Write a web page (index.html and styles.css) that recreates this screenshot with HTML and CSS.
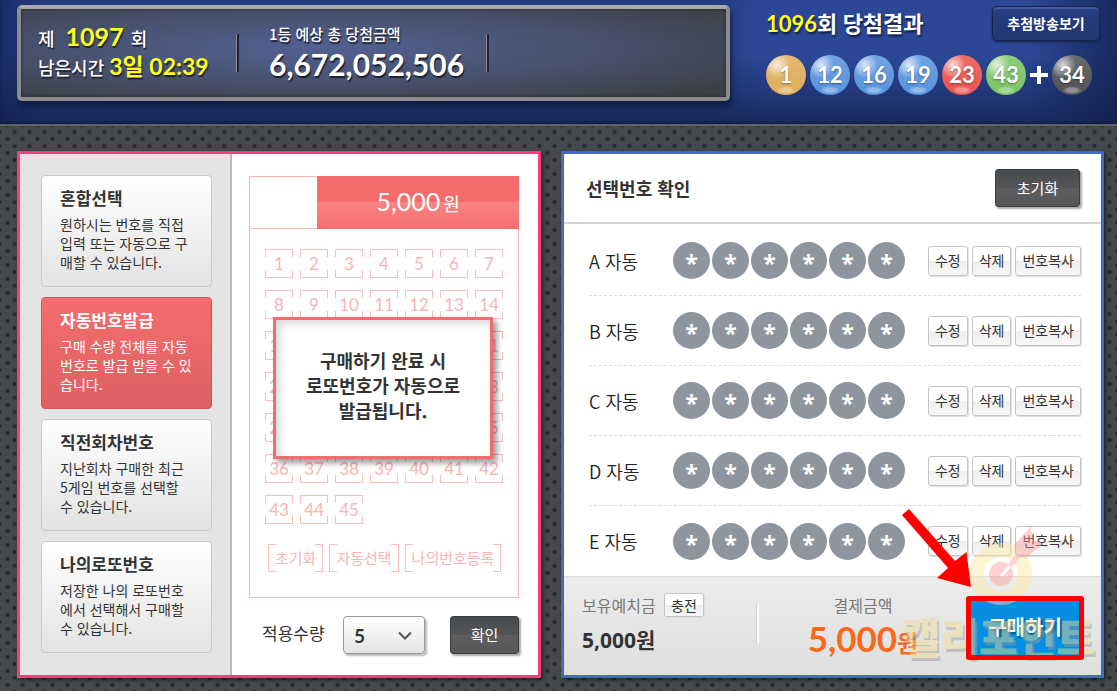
FILE: index.html
```html
<!DOCTYPE html>
<html lang="ko">
  <head>
    <meta charset="UTF-8" />
    <meta name="viewport" content="width=device-width, initial-scale=1.0" />
    <title>로또 구매</title>
    <link rel="stylesheet" href="styles.css">
  </head>
  <body>
    <header class="top">
      <div class="board">
        <div class="board-round">
          <p>제 <strong class="round-no">1097</strong> 회</p>
          <p>남은시간 <strong>3일 02:39</strong></p>
        </div>
        <div class="board-prize">
          <h2>1등 예상 총 당첨금액</h2>
          <p>6,672,052,506</p>
        </div>
      </div>
      <div class="result">
        <div class="result-head">
          <h1><em>1096</em>회 당첨결과</h1>
          <button type="button" class="btn-live">추첨방송보기</button>
        </div>
        <div class="balls">
          <span class="ball yellow">1</span>
          <span class="ball blue">12</span>
          <span class="ball blue">16</span>
          <span class="ball blue">19</span>
          <span class="ball red">23</span>
          <span class="ball green">43</span>
          <svg class="plus" viewBox="0 0 18 18"><path d="M9 0v18M0 9h18" /></svg>
          <span class="ball gray">34</span>
        </div>
      </div>
    </header>

    <main class="panels">
      <section class="panel pick">
        <nav class="ways">
          <button type="button" class="way">
            <strong>혼합선택</strong>
            <span>원하시는 번호를 직접<br>입력 또는 자동으로 구<br>매할 수 있습니다.</span>
          </button>
          <button type="button" class="way on">
            <strong>자동번호발급</strong>
            <span>구매 수량 전체를 자동<br>번호로 발급 받을 수 있<br>습니다.</span>
          </button>
          <button type="button" class="way">
            <strong>직전회차번호</strong>
            <span>지난회차 구매한 최근<br>5게임 번호를 선택할<br>수 있습니다.</span>
          </button>
          <button type="button" class="way">
            <strong>나의로또번호</strong>
            <span>저장한 나의 로또번호<br>에서 선택해서 구매할<br>수 있습니다.</span>
          </button>
        </nav>

        <div class="slip-area">
          <div class="slip">
            <div class="slip-head"><p><b>5,000</b>원</p></div>
            <div class="numbers" id="numbers"></div>
            <div class="slip-tools">
              <button type="button">초기화</button>
              <button type="button">자동선택</button>
              <button type="button">나의번호등록</button>
            </div>
            <div class="notice">구매하기 완료 시<br>로또번호가 자동으로<br>발급됩니다.</div>
          </div>
          <div class="amount">
            <label for="qty">적용수량</label>
            <div class="select">
              <select id="qty">
                <option>1</option>
                <option>2</option>
                <option>3</option>
                <option>4</option>
                <option selected>5</option>
              </select>
              <svg viewBox="0 0 14 10"><path d="M1 1.500l6 6 6-6" /></svg>
            </div>
            <button type="button" class="btn-dark btn-ok">확인</button>
          </div>
        </div>
      </section>

      <section class="panel cart">
        <div class="cart-head">
          <h2>선택번호 확인</h2>
          <button type="button" class="btn-dark btn-reset">초기화</button>
        </div>
        <ul class="games" id="games"></ul>
        <div class="pay">
          <div class="deposit">
            <p>보유예치금 <button type="button" class="btn-small">충전</button></p>
            <strong>5,000원</strong>
          </div>
          <div class="total">
            <p>결제금액</p>
            <strong>5,000<small>원</small></strong>
          </div>
          <button type="button" class="btn-buy">구매하기</button>

          <div class="mark">
            <svg viewBox="0 0 64 82">
              <circle cx="31" cy="51" r="24" fill="none" stroke="#ffe9a0" stroke-width="14" />
              <circle cx="31" cy="51" r="12" fill="#ff9c98" />
              <path d="M31 53L54 26" stroke="#ff9c98" stroke-width="5" />
              <path d="M44 22L61 3l2 14 11 3-18 15-10-1z" fill="#ff9c98" />
              <path d="M31 53l9-10" stroke="#fff" stroke-width="3" />
            </svg>
            <span>캘리포인트</span>
          </div>
          <div class="frame"></div>
          <svg class="arrow" viewBox="0 0 70 80">
            <path d="M8 1L54 53 65.500 44 70 79 36 70 47 60 1 7z" />
          </svg>
        </div>
      </section>
    </main>

    <script>
      const numbers = document.getElementById("numbers");
      for (let i = 1; i <= 45; i++) {
        const btn = document.createElement("button");
        btn.type = "button";
        btn.textContent = i;
        numbers.appendChild(btn);
      }

      const games = document.getElementById("games");
      ["A", "B", "C", "D", "E"].forEach((name) => {
        const row = document.createElement("li");
        row.innerHTML = `
          <span class="name">${name} 자동</span>
          <span class="stars">${"<i>*</i>".repeat(6)}</span>
          <span class="tools">
            <button type="button" class="btn-small">수정</button>
            <button type="button" class="btn-small">삭제</button>
            <button type="button" class="btn-small">번호복사</button>
          </span>`;
        games.appendChild(row);
      });
    </script>
  </body>
</html>
```

FILE: styles.css
```css
* {
  box-sizing: border-box;
  margin: 0;
  padding: 0;
}

body {
  font-family: "Noto Sans CJK KR", sans-serif;
  font-size: 14px;
  color: #333;
  background-color: #444a4c;
  background-image:
    radial-gradient(circle at 50% 50%, #25282a 0 1px, transparent 3px),
    radial-gradient(circle at 50% 50%, #25282a 0 1px, transparent 3px);
  background-size: 15px 14px;
  background-position: 7px 125px, 0 132px;
}

button,
select {
  font-family: inherit;
  font-size: 14px;
  color: inherit;
  cursor: pointer;
}

/* header */
.top {
  display: grid;
  grid-template-columns: 713fr 334fr;
  gap: 36px;
  padding: 5px 17px 23px;
  background: linear-gradient(transparent 45%, rgba(18, 30, 72, 0.7)),
    linear-gradient(90deg, #1b2d68, #243d82 4%, #243d82 64%, #2b4796 68%, #2b4796 92%, #182a60);
  border-bottom: 2px solid #606568;
  box-shadow: inset 0 -1px 2px #101b40;
}

.board {
  display: flex;
  align-items: center;
  height: 96px;
  border: 4px solid #8c8c8e;
  border-top-color: #aaa;
  border-radius: 5px;
  background: radial-gradient(ellipse at 42% 45%, #526092, #485370 45%, #3c3f46 90%);
  box-shadow: 2px 5px 5px rgba(10, 18, 50, 0.6), inset 0 0 3px #222;
  color: #fff;
  text-shadow: 1px 2px 1px #1c2030;
}

.board-round,
.board-prize {
  position: relative;
  height: 62px;
}

.board-round {
  width: 218px;
  padding-left: 17px;
  font-size: 18px;
  font-weight: 500;
  line-height: 28px;
}

.board-prize {
  width: 250px;
  padding-left: 30px;
}

.board-round::after,
.board-prize::after {
  content: "";
  position: absolute;
  right: 0;
  top: 12px;
  width: 2px;
  height: 38px;
  background: #20242e;
  border-left: 1px solid #8a8d98;
}

.board-round strong {
  font-family: Lato, "Noto Sans CJK KR", sans-serif;
  font-size: 23px;
  color: #ff2;
}

.board-round .round-no {
  margin: 0 2px 0 6px;
  font-size: 25px;
}

.board-prize h2 {
  font-size: 15px;
  font-weight: 500;
  line-height: 24px;
}

.board-prize p {
  font-family: Lato, sans-serif;
  font-size: 30px;
  font-weight: 700;
  line-height: 36px;
}

.result-head {
  display: flex;
  justify-content: space-between;
  align-items: center;
  padding-top: 1px;
}

.result h1 {
  font-family: Lato, "Noto Sans CJK KR", sans-serif;
  font-size: 22px;
  font-weight: 700;
  line-height: 32px;
  color: #fff;
  text-shadow: 1px 2px 2px #101a40;
}

.result h1 em {
  font-style: normal;
  color: #ff2;
}

.btn-live {
  width: 108px;
  height: 35px;
  padding-bottom: 2px;
  border: 1px solid #16244e;
  border-radius: 5px;
  background: linear-gradient(#263f85, #22366f);
  box-shadow: inset 0 2px 1px #4a5c94, 0 1px 2px #14224c;
  color: #fff;
  font-weight: 700;
}

.balls {
  display: flex;
  align-items: center;
  gap: 4px;
  margin-top: 14px;
}

.ball {
  width: 40px;
  height: 40px;
  border-radius: 50%;
  color: #fff;
  font-family: Lato, sans-serif;
  font-size: 22px;
  font-weight: 700;
  line-height: 39px;
  text-align: center;
  text-shadow: 0 1px 2px rgba(0, 0, 0, 0.4);
  background-image:
    radial-gradient(circle at 27% 25%, rgba(255, 255, 255, 0.75), transparent 32%),
    radial-gradient(10px 4px at 50% 88%, rgba(255, 255, 255, 0.35) 50%, transparent),
    linear-gradient(rgba(255, 255, 255, 0.15), transparent);
}

.ball.yellow { background-color: #dfad59; }
.ball.blue { background-color: #5793dd; }
.ball.red { background-color: #e9534e; }
.ball.green { background-color: #79c466; }
.ball.gray { background-color: #505157; }

.plus {
  width: 18px;
  height: 18px;
  stroke: #fff;
  stroke-width: 4;
}

/* panels */
.panels {
  display: grid;
  grid-template-columns: 524fr 543fr;
  gap: 20px;
  padding: 25px 13px 13px 17px;
}

.panel {
  background: #fff;
  border: 3px solid #ff3a78;
  box-shadow: 2px 2px 4px rgba(0, 0, 0, 0.5);
}

.pick {
  display: flex;
}

.ways {
  display: flex;
  flex-direction: column;
  gap: 10px;
  width: 212px;
  padding: 21px 18px 22px 21px;
  background: #e4e4e4;
  border-right: 2px solid #bbb;
}

.way {
  display: flex;
  flex-direction: column;
  justify-content: flex-start;
  height: 112px;
  padding: 10px 0 0 18px;
  text-align: left;
  border: 1px solid #c9c9c9;
  border-radius: 4px;
  background: linear-gradient(#fff, #e3e3e3);
}

.way strong {
  font-size: 17px;
  line-height: 24px;
  margin-bottom: 5px;
}

.way span {
  line-height: 19px;
  white-space: nowrap;
}

.way.on {
  color: #fff;
  border-color: #cf5557;
  background: linear-gradient(#f66d6e, #dc6062);
}

.slip-area {
  flex: 1;
  padding: 22px 19px 20px 17px;
}

.slip {
  position: relative;
  height: 422px;
  border: 1px solid #f9b4b5;
}

.slip-head {
  display: flex;
  justify-content: flex-end;
  height: 53px;
  margin: -1px -1px 0 0;
  border-bottom: 1px solid #f9b4b5;
}

.slip-head p {
  width: 75%;
  height: 53px;
  background: linear-gradient(#f66c6d 50%, #f88484 50%, #f66f70);
  color: #fff;
  font-size: 18px;
  line-height: 50px;
  text-align: center;
}

.slip-head b {
  margin-right: 3px;
  font-family: Lato, sans-serif;
  font-size: 25px;
  font-weight: 400;
}

.numbers {
  display: grid;
  grid-template-columns: repeat(7, 28px);
  gap: 12px 7px;
  padding: 20px 0 20px 15px;
}

.numbers button,
.slip-tools button {
  position: relative;
  border: 0;
  background: none;
  color: #f8b5b5;
}

.numbers button {
  height: 29px;
  font-family: Lato, sans-serif;
  font-size: 17px;
  line-height: 29px;
}

.numbers button::before,
.numbers button::after {
  content: "";
  position: absolute;
  left: 0;
  right: 0;
  height: 7px;
  border: 1px solid #f9bdbd;
}

.numbers button::before {
  top: 0;
  border-bottom: 0;
}

.numbers button::after {
  bottom: 0;
  border-top: 0;
}

.slip-tools {
  display: flex;
  gap: 6px;
  padding-left: 18px;
}

.slip-tools button {
  height: 28px;
  padding: 0 7px;
  font-size: 15px;
  line-height: 26px;
  white-space: nowrap;
}

.slip-tools button::before,
.slip-tools button::after {
  content: "";
  position: absolute;
  top: 0;
  bottom: 0;
  width: 7px;
  border: 1px solid #f9bdbd;
}

.slip-tools button::before {
  left: 0;
  border-right: 0;
}

.slip-tools button::after {
  right: 0;
  border-left: 0;
}

.notice {
  position: absolute;
  left: 23px;
  right: 25px;
  top: 140px;
  height: 142px;
  padding: 28px 0;
  border: 3px solid #f56c6d;
  background: #fff;
  box-shadow: 4px 4px 6px rgba(0, 0, 0, 0.4), inset 4px 4px 8px rgba(0, 0, 0, 0.15);
  font-size: 18px;
  font-weight: 700;
  line-height: 25px;
  text-align: center;
}

.amount {
  display: flex;
  align-items: center;
  margin-top: 18px;
  padding-left: 13px;
}

.amount label {
  width: 81px;
  font-size: 17px;
  line-height: 24px;
  padding-bottom: 4px;
  white-space: nowrap;
}

.select {
  position: relative;
  width: 82px;
  height: 38px;
}

.select select {
  width: 100%;
  height: 100%;
  padding-left: 10px;
  appearance: none;
  border: 1px solid #999;
  border-radius: 4px;
  background: linear-gradient(#fff, #e4e4e4);
  box-shadow: 2px 2px 2px #bbb;
  font-family: Lato, sans-serif;
  font-size: 19px;
  font-weight: 700;
}

.select svg {
  position: absolute;
  right: 13px;
  top: 15px;
  width: 14px;
  height: 10px;
  fill: none;
  stroke: #555;
  stroke-width: 2;
  pointer-events: none;
}

.btn-dark {
  height: 38px;
  padding-bottom: 2px;
  border: 1px solid #3b3e40;
  border-radius: 3px;
  background: linear-gradient(#484b4d, #535557 50%, #5e5e60 50%, #565759);
  box-shadow: 2px 2px 2px #aaa;
  color: #fff;
  font-size: 15px;
}

.btn-ok {
  width: 69px;
  margin-left: auto;
}

/* selected games */
.cart {
  display: flex;
  flex-direction: column;
  border-color: #4169c9;
}

.cart-head {
  display: flex;
  justify-content: space-between;
  align-items: center;
  height: 70px;
  padding: 0 21px 0 22px;
  border-bottom: 2px solid #d5d5d5;
}

.cart-head h2 {
  font-size: 18px;
}

.btn-reset {
  width: 85px;
}

.games {
  padding: 2px 20px 0 25px;
  list-style: none;
}

.games li {
  display: flex;
  align-items: center;
  height: 70px;
  border-bottom: 1px dashed #ddd;
}

.games li:last-child {
  border-bottom: 0;
}

.name {
  width: 84px;
  color: #222;
  font-size: 18px;
  font-weight: 350;
  line-height: 26px;
}

.stars {
  display: flex;
  gap: 2px;
}

.stars i {
  width: 37px;
  height: 37px;
  border-radius: 50%;
  background: #8f959f;
  color: #fff;
  font-family: "Open Sans", sans-serif;
  font-size: 23px;
  font-style: normal;
  font-weight: 700;
  line-height: 42px;
  text-align: center;
}

.tools {
  display: flex;
  gap: 4px;
  margin-left: auto;
}

.btn-small {
  height: 30px;
  padding: 0 6px 2px;
  border: 1px solid #c4c4c4;
  border-radius: 3px;
  background: linear-gradient(#fff 50%, #eee 50%, #f8f8f8);
  box-shadow: 1px 1px 1px #ddd;
  line-height: 26px;
  white-space: nowrap;
}

.pay {
  position: relative;
  flex: 1;
  display: flex;
  align-items: flex-start;
  padding: 16px 22px 10px 18px;
  border-top: 1px solid #ddd;
  background: linear-gradient(#ececec, #dfdfdf);
}

.deposit {
  position: relative;
  width: 177px;
}

.deposit::after {
  content: "";
  position: absolute;
  right: 0;
  top: 12px;
  width: 2px;
  height: 38px;
  border-left: 1px solid #c6c6c6;
  background: #fff;
}

.deposit p,
.total p {
  color: #777;
  font-size: 16px;
  line-height: 24px;
}

.deposit .btn-small {
  height: 24px;
  margin-left: 4px;
  padding-bottom: 0;
  line-height: 20px;
  color: #333;
  vertical-align: top;
}

.deposit strong {
  display: block;
  margin-top: 8px;
  font-family: "Open Sans", "Noto Sans CJK KR", sans-serif;
  font-size: 21px;
  line-height: 30px;
}

.total {
  flex: 1;
  padding-right: 4px;
  text-align: center;
}

.total strong {
  display: block;
  color: #f9691b;
  font-family: Lato, "Noto Sans CJK KR", sans-serif;
  font-size: 35px;
  line-height: 42px;
  white-space: nowrap;
}

.total small {
  font-size: 23px;
  line-height: 24px;
}

.btn-buy {
  width: 108px;
  height: 56px;
  margin-top: 7px;
  padding-bottom: 4px;
  border: 0;
  background: #068fe0;
  color: #fff;
  font-size: 20px;
  font-weight: 700;
  text-shadow: 2px 2px 2px rgba(0, 0, 0, 0.4);
}

/* watermark, red frame and arrow over the pay area */
.mark,
.frame,
.arrow {
  position: absolute;
  pointer-events: none;
}

.mark {
  right: 6px;
  bottom: 8px;
  opacity: 0.45;
}

.mark svg {
  display: block;
  width: 64px;
  height: 82px;
  margin-left: 68px;
  overflow: visible;
}

.mark span {
  display: block;
  color: #f3dd90;
  font-size: 42px;
  font-weight: 900;
  line-height: 62px;
  text-shadow: 2px 3px 0 #9a9a9a;
  white-space: nowrap;
}

.frame {
  right: 17px;
  bottom: 15px;
  width: 118px;
  height: 64px;
  border: 5px solid #f00;
  border-radius: 3px;
}

.arrow {
  right: 130px;
  bottom: 87px;
  width: 70px;
  height: 80px;
  fill: #f00;
}
```
